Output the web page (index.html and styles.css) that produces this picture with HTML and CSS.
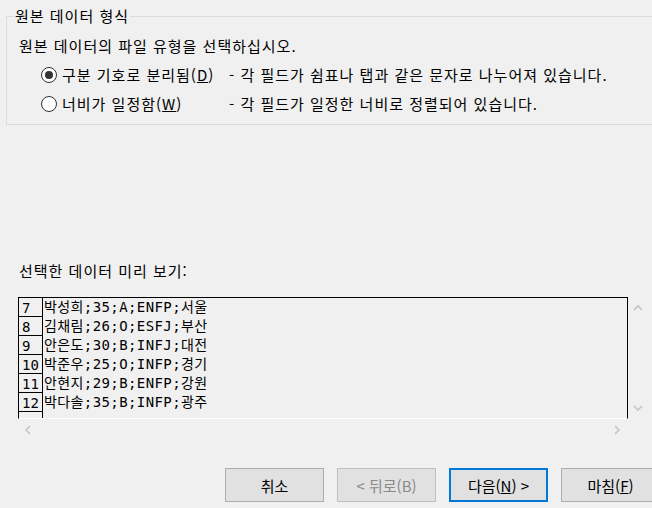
FILE: index.html
```html
<!DOCTYPE html>
<html lang="ko">
<head>
<meta charset="utf-8">
<title>텍스트 마법사</title>
<link rel="stylesheet" href="styles.css">
</head>
<body>
<div class="dialog">
  <fieldset class="group">
    <legend>원본 데이터 형식</legend>
    <p class="prompt">원본 데이터의 파일 유형을 선택하십시오.</p>
    <div class="option first">
      <span class="radio checked"></span>
      <span class="opt-label">구분 기호로 분리됨(<u>D</u>)</span>
      <span class="opt-desc">- 각 필드가 쉼표나 탭과 같은 문자로 나누어져 있습니다.</span>
    </div>
    <div class="option">
      <span class="radio"></span>
      <span class="opt-label">너비가 일정함(<u>W</u>)</span>
      <span class="opt-desc">- 각 필드가 일정한 너비로 정렬되어 있습니다.</span>
    </div>
  </fieldset>

  <p class="preview-label">선택한 데이터 미리 보기:</p>

  <div class="preview">
    <div class="preview-main">
      <div class="grid">
        <div class="row"><span class="num">7</span><span class="cell">박성희;35;A;ENFP;서울</span></div>
        <div class="row"><span class="num">8</span><span class="cell">김채림;26;O;ESFJ;부산</span></div>
        <div class="row"><span class="num">9</span><span class="cell">안은도;30;B;INFJ;대전</span></div>
        <div class="row"><span class="num">10</span><span class="cell">박준우;25;O;INFP;경기</span></div>
        <div class="row"><span class="num">11</span><span class="cell">안현지;29;B;ENFP;강원</span></div>
        <div class="row"><span class="num">12</span><span class="cell">박다솔;35;B;INFP;광주</span></div>
        <div class="row"><span class="num"></span><span class="cell"></span></div>
      </div>
      <div class="vscroll">
        <svg class="chev" width="10" height="7" viewBox="0 0 10 7"><polyline points="1,6 5,2 9,6"/></svg>
        <svg class="chev" width="10" height="7" viewBox="0 0 10 7"><polyline points="1,1 5,5 9,1"/></svg>
      </div>
    </div>
    <div class="hscroll">
      <svg class="chev" width="7" height="10" viewBox="0 0 7 10"><polyline points="6,1 2,5 6,9"/></svg>
      <svg class="chev" width="7" height="10" viewBox="0 0 7 10"><polyline points="1,1 5,5 1,9"/></svg>
    </div>
  </div>

  <div class="buttons">
    <button class="btn">취소</button>
    <button class="btn disabled">&lt; 뒤로(B)</button>
    <button class="btn default">다음(<u>N</u>) &gt;</button>
    <button class="btn">마침(<u>F</u>)</button>
  </div>
</div>
</body>
</html>
```

FILE: styles.css
```css
html, body {
  margin: 0;
  padding: 0;
}

body {
  background: #f0f0f0;
  color: #000;
  font-family: "Noto Sans CJK KR", "Noto Sans", sans-serif;
  font-size: 15px;
  width: 652px;
  height: 508px;
  overflow: hidden;
}

.dialog {
  padding-top: 6px;
  width: 652px;
  overflow: hidden;
}

.group {
  margin: 0 -40px 0 6px;
  padding: 0 0 6px 0;
  border: 1px solid #dcdcdc;
  min-width: 0;
  letter-spacing: 1px;
}

.group legend {
  margin-left: 7px;
  padding: 0 1px;
  line-height: 20px;
  height: 20px;
}

.prompt {
  margin: 10px 0 0 12px;
  line-height: 20px;
}

.option {
  display: flex;
  align-items: center;
  height: 29px;
  padding-left: 34px;
  white-space: nowrap;
}

.option.first {
  margin-top: 4px;
}

.radio {
  width: 16px;
  height: 16px;
  box-sizing: border-box;
  border: 1px solid #333;
  border-radius: 50%;
  background: #fff;
  margin-right: 5px;
  display: flex;
  align-items: center;
  justify-content: center;
  flex-shrink: 0;
}

.radio.checked::after {
  content: "";
  width: 8px;
  height: 8px;
  border-radius: 50%;
  background: #333;
}

.opt-label {
  width: 167px;
  flex-shrink: 0;
}

.preview-label {
  margin: 136px 0 0 19px;
  line-height: 20px;
  letter-spacing: 1px;
}

.preview {
  margin: 16px 0 0 18px;
  width: 630px;
}

.preview-main {
  display: flex;
  height: 122px;
}

.grid {
  width: 610px;
  height: 122px;
  box-sizing: border-box;
  border: 1px solid #000;
  border-bottom-color: #fff;
  overflow: hidden;
  font-family: "DejaVu Sans Mono", "Noto Sans CJK KR", monospace;
  font-size: 14px;
}

.row {
  display: flex;
  height: 19px;
}

.num {
  width: 24px;
  height: 19px;
  box-sizing: border-box;
  border-right: 1px solid #000;
  border-bottom: 1px solid #000;
  padding-left: 3px;
  line-height: 20px;
  flex-shrink: 0;
}

.cell {
  padding-left: 1px;
  line-height: 18px;
  letter-spacing: 0.4px;
  white-space: nowrap;
}

.chev {
  display: block;
  fill: none;
  stroke: #c4c4c4;
  stroke-width: 1.6;
}

.vscroll {
  width: 20px;
  display: flex;
  flex-direction: column;
  align-items: center;
  justify-content: space-between;
  padding: 7px 0;
  box-sizing: border-box;
}

.hscroll {
  width: 610px;
  height: 21px;
  box-sizing: border-box;
  display: flex;
  align-items: center;
  justify-content: space-between;
  padding: 0 7px 0 6px;
}

.buttons {
  display: flex;
  gap: 13px;
  margin-top: 28px;
  padding-left: 225px;
}

.btn {
  flex-shrink: 0;
  width: 99px;
  height: 34px;
  box-sizing: border-box;
  border: 1px solid #adadad;
  background: #e1e1e1;
  color: #000;
  font-family: "Noto Sans CJK KR", "Noto Sans", sans-serif;
  font-size: 15px;
  padding: 0;
  display: flex;
  align-items: center;
  justify-content: center;
}

.btn.disabled {
  border-color: #bfbfbf;
  color: #8a8a8a;
}

.btn.default {
  border: 2px solid #0078d7;
}
```
